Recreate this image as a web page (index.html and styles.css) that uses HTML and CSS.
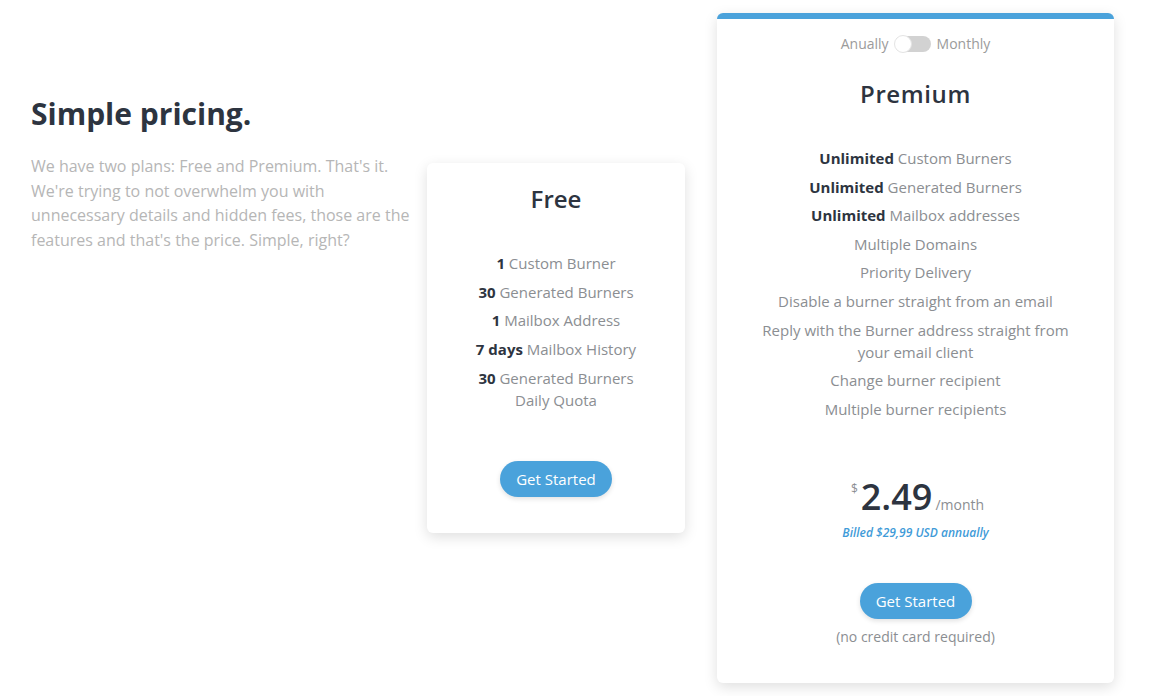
FILE: index.html
```html
<!DOCTYPE html>
<html>
<head>
<meta charset="utf-8">
<link rel="stylesheet" href="styles.css">
</head>
<body>
<div class="page">
  <div class="intro">
    <h1 class="intro-title">Simple pricing.</h1>
    <p class="intro-text">We have two plans: Free and Premium. That's it. We're trying to not overwhelm you with unnecessary details and hidden fees, those are the features and that's the price. Simple, right?</p>
  </div>

  <div class="card card-free">
    <h2 class="plan-title">Free</h2>
    <ul class="features">
      <li><b>1</b> Custom Burner</li>
      <li><b>30</b> Generated Burners</li>
      <li><b>1</b> Mailbox Address</li>
      <li><b>7 days</b> Mailbox History</li>
      <li><b>30</b> Generated Burners Daily Quota</li>
    </ul>
    <button class="btn">Get Started</button>
  </div>

  <div class="card card-premium">
    <div class="period">
      <span>Anually</span>
      <span class="toggle"><span class="knob"></span></span>
      <span>Monthly</span>
    </div>
    <h2 class="plan-title plan-title-premium">Premium</h2>
    <ul class="features features-premium">
      <li><b>Unlimited</b> Custom Burners</li>
      <li><b>Unlimited</b> Generated Burners</li>
      <li><b>Unlimited</b> Mailbox addresses</li>
      <li>Multiple Domains</li>
      <li>Priority Delivery</li>
      <li>Disable a burner straight from an email</li>
      <li>Reply with the Burner address straight from your email client</li>
      <li>Change burner recipient</li>
      <li>Multiple burner recipients</li>
    </ul>
    <div class="price">
      <span class="currency">$</span><span class="amount">2.49</span><span class="per">/month</span>
    </div>
    <div class="billed">Billed $29,99 USD annually</div>
    <button class="btn btn-premium">Get Started</button>
    <div class="note">(no credit card required)</div>
  </div>
</div>
</body>
</html>
```

FILE: styles.css
```css
* { box-sizing: border-box; }

body {
  margin: 0;
  background: #ffffff;
  font-family: "Open Sans", "Noto Sans", sans-serif;
  color: #2d3440;
}

.page {
  display: flex;
  align-items: center;
  padding: 13px 0 13px 31px;
}

.intro {
  align-self: flex-start;
  width: 382px;
  margin-top: 81px;
  margin-right: 14px;
}

.intro-title {
  margin: 0;
  font-size: 30px;
  line-height: 40px;
  font-weight: 700;
  color: #2d3440;
}

.intro-text {
  margin: 20px 0 0;
  font-size: 16px;
  line-height: 24.5px;
  color: #b6b6b6;
}

.card {
  background: #fff;
  border-radius: 6px;
  box-shadow: 0 4px 14px rgba(0, 0, 0, 0.13);
  text-align: center;
  display: flex;
  flex-direction: column;
  align-items: center;
}

.card-free {
  width: 258px;
  padding: 19px 40px 36px;
  margin-right: 32px;
}

.card-premium {
  width: 397px;
  border-top: 6px solid #4aa2db;
  padding: 15px 30px 36px;
}

.plan-title {
  margin: 0;
  font-size: 24px;
  line-height: 33px;
  font-weight: 600;
  color: #2d3440;
}

.plan-title-premium {
  margin-top: 23px;
  letter-spacing: 0.6px;
}

.features {
  list-style: none;
  margin: 37px 0 0;
  padding: 0;
  font-size: 15px;
  line-height: 22px;
  color: #8b8e92;
}

.features li { margin-bottom: 6.6px; }
.features li:last-child { margin-bottom: 0; }

.features b {
  font-weight: 700;
  color: #2d3440;
}

.features-premium { margin-top: 37px; }

.btn {
  margin-top: 50px;
  width: 112px;
  height: 36px;
  border: none;
  border-radius: 18px;
  background: #4aa2db;
  color: #fff;
  font-family: "Open Sans", "Noto Sans", sans-serif;
  font-size: 15px;
  font-weight: 400;
  box-shadow: 0 2px 5px rgba(0, 0, 0, 0.12);
  padding: 0;
}

.period {
  display: flex;
  align-items: center;
  gap: 6px;
  font-size: 14px;
  line-height: 20px;
  color: #9b9b9b;
}

.toggle {
  position: relative;
  display: inline-block;
  width: 36px;
  height: 16px;
  border-radius: 8px;
  background: #d2d2d2;
}

.knob {
  position: absolute;
  left: -1px;
  top: -1px;
  width: 18px;
  height: 18px;
  border-radius: 50%;
  background: #fff;
  border: 1px solid #e4e4e4;
}

.price {
  margin-top: 57px;
  display: flex;
  align-items: baseline;
  justify-content: center;
  line-height: 40px;
  padding-left: 4px;
}

.currency {
  font-size: 12px;
  color: #8b8e92;
  align-self: flex-start;
  line-height: 24px;
  margin-right: 3px;
}

.amount {
  font-size: 36px;
  font-weight: 600;
  color: #2d3440;
}

.per {
  font-size: 14px;
  color: #8b8e92;
  margin-left: 3px;
}

.billed {
  margin-top: 0;
  font-size: 12px;
  line-height: 16px;
  font-style: italic;
  font-weight: 600;
  color: #3f9bd8;
}

.btn-premium { margin-top: 42px; }

.note {
  margin-top: 8px;
  font-size: 14px;
  line-height: 20px;
  color: #8b8e92;
}
```
